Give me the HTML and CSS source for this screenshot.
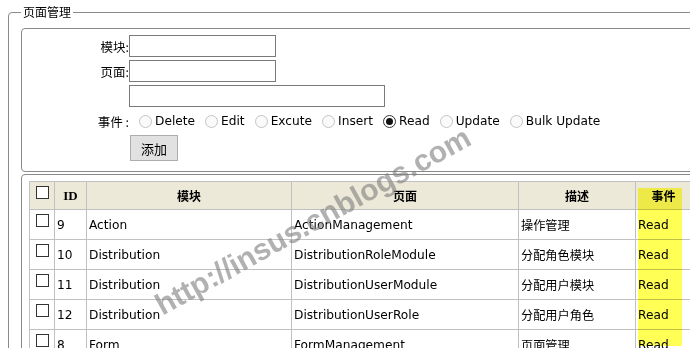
FILE: index.html
```html
<!DOCTYPE html>
<html lang="zh-CN">
<head>
    <meta charset="UTF-8">
    <title>页面管理</title>
    <link rel="stylesheet" href="styles.css">
</head>
<body>
    <!-- 页面管理 -->
    <fieldset class="outer">
        <legend>页面管理</legend>

        <!-- 添加表单 -->
        <fieldset class="box form-box">
            <div class="form">
                <label class="lbl">模块:</label>
                <input type="text" class="txt">

                <label class="lbl">页面:</label>
                <input type="text" class="txt">

                <span></span>
                <input type="text" class="txt wide">

                <label class="lbl">事件 :</label>
                <div class="events">
                    <span class="opt"><span class="radio"></span>Delete</span>
                    <span class="opt"><span class="radio"></span>Edit</span>
                    <span class="opt"><span class="radio"></span>Excute</span>
                    <span class="opt"><span class="radio"></span>Insert</span>
                    <span class="opt"><span class="radio checked"></span>Read</span>
                    <span class="opt"><span class="radio"></span>Update</span>
                    <span class="opt"><span class="radio"></span>Bulk Update</span>
                </div>

                <span></span>
                <div><button type="button" class="btn">添加</button></div>
            </div>
        </fieldset>

        <!-- 列表 -->
        <fieldset class="box list-box">
            <table class="grid">
                <colgroup>
                    <col style="width:25px">
                    <col style="width:32px">
                    <col style="width:205px">
                    <col style="width:227px">
                    <col style="width:117px">
                    <col style="width:56px">
                </colgroup>
                <thead>
                    <tr>
                        <th><span class="chk"></span></th>
                        <th class="id">ID</th>
                        <th>模块</th>
                        <th>页面</th>
                        <th>描述</th>
                        <th>事件</th>
                    </tr>
                </thead>
                <tbody>
                    <tr>
                        <td><span class="chk"></span></td>
                        <td>9</td>
                        <td>Action</td>
                        <td>ActionManagement</td>
                        <td>操作管理</td>
                        <td>Read</td>
                    </tr>
                    <tr>
                        <td><span class="chk"></span></td>
                        <td>10</td>
                        <td>Distribution</td>
                        <td>DistributionRoleModule</td>
                        <td>分配角色模块</td>
                        <td>Read</td>
                    </tr>
                    <tr>
                        <td><span class="chk"></span></td>
                        <td>11</td>
                        <td>Distribution</td>
                        <td>DistributionUserModule</td>
                        <td>分配用户模块</td>
                        <td>Read</td>
                    </tr>
                    <tr>
                        <td><span class="chk"></span></td>
                        <td>12</td>
                        <td>Distribution</td>
                        <td>DistributionUserRole</td>
                        <td>分配用户角色</td>
                        <td>Read</td>
                    </tr>
                    <tr>
                        <td><span class="chk"></span></td>
                        <td>8</td>
                        <td>Form</td>
                        <td>FormManagement</td>
                        <td>页面管理</td>
                        <td>Read</td>
                    </tr>
                </tbody>
            </table>
        </fieldset>
    </fieldset>

    <!-- 高亮标记 + 水印 -->
    <div class="highlight"></div>
    <div class="watermark">http://insus.cnblogs.com</div>
</body>
</html>
```

FILE: styles.css
```css
html, body {
    overflow: hidden;
}

body {
    margin: 0;
    padding: 5px 0 0 8px;
    background: #ffffff;
    color: #000000;
    font-family: "DejaVu Sans", Verdana, "Noto Sans CJK SC", sans-serif;
    font-size: 12px;
    position: relative;
    height: 343px;
}

/* Cadres */
.outer {
    margin: 0;
    width: 760px;
    border: 1px solid #8a8a8a;
    border-radius: 4px;
    padding: 9px 12px 0 12px;
}

.outer legend {
    padding: 0 2px;
    font-size: 12px;
    line-height: 14px;
    font-family: "Noto Sans CJK SC", sans-serif;
}

.box {
    margin: 0;
    border: 1px solid #8a8a8a;
    border-radius: 4px;
    min-width: 0;
}

.form-box {
    padding: 6px 8px 10px 8px;
}

.list-box {
    margin-top: 2px;
    padding: 6px 7px 0 7px;
}

/* Formulaire */
.form {
    display: grid;
    grid-template-columns: 99px auto;
    row-gap: 3px;
    align-items: center;
}

.lbl {
    text-align: right;
    font-family: "Noto Sans CJK SC", sans-serif;
    font-size: 12.5px;
    white-space: nowrap;
}

.txt {
    box-sizing: border-box;
    width: 147px;
    height: 22px;
    margin: 0;
    border: 1px solid #7a7a7a;
    padding: 1px 3px;
    font-size: 12px;
}

.txt.wide {
    width: 256px;
}

.events {
    height: 22px;
    display: flex;
    align-items: center;
    padding-left: 10px;
    font-size: 12.2px;
}

.opt {
    display: flex;
    align-items: center;
    margin-right: 10px;
}

.radio {
    box-sizing: border-box;
    width: 13px;
    height: 13px;
    border: 1px solid #c4c4c4;
    border-radius: 50%;
    background: #fafafa;
    margin-right: 3px;
    position: relative;
}

.radio.checked {
    border-color: #333333;
    background: #ffffff;
}

.radio.checked::after {
    content: '';
    position: absolute;
    left: 2px;
    top: 2px;
    width: 7px;
    height: 7px;
    border-radius: 50%;
    background: #111111;
}

.btn {
    margin-left: 1px;
    width: 48px;
    height: 26px;
    border: 1px solid #adadad;
    background: #e1e1e1;
    font-family: "Noto Sans CJK SC", sans-serif;
    font-size: 13px;
    padding: 0;
    color: #000000;
}

/* Tableau */
.grid {
    table-layout: fixed;
    width: 662px;
    border-collapse: collapse;
    font-size: 12px;
}

.grid th, .grid td {
    border: 1px solid #c0c0c0;
    padding: 0 2px;
    white-space: nowrap;
    overflow: hidden;
}

.grid th {
    height: 27px;
    background: #ece9d8;
    font-family: "Noto Sans CJK SC", sans-serif;
    font-weight: bold;
    font-size: 12px;
    text-align: center;
}

.grid th.id {
    font-family: "Liberation Serif", serif;
    font-size: 13px;
}

.grid td {
    height: 29px;
    font-family: "DejaVu Sans", "Noto Sans CJK SC", sans-serif;
    font-size: 12.2px;
}

.grid td:first-child, .grid th:first-child {
    text-align: center;
    padding: 0;
}

.chk {
    display: inline-block;
    box-sizing: border-box;
    width: 13px;
    height: 13px;
    border: 1px solid #333333;
    background: #ffffff;
    vertical-align: -1px;
    position: relative;
    top: -3px;
}

/* Marquage jaune sur la colonne 事件 */
.highlight {
    position: absolute;
    left: 638px;
    top: 188px;
    width: 44px;
    height: 158px;
    background: #ffff55;
    mix-blend-mode: multiply;
    pointer-events: none;
}

/* Filigrane */
.watermark {
    position: absolute;
    left: 313px;
    top: 221px;
    transform: translate(-50%, -50%) rotate(-29deg);
    font-family: "Liberation Sans", Arial, sans-serif;
    font-weight: bold;
    font-size: 30px;
    color: rgba(125, 125, 125, 0.6);
    white-space: nowrap;
    pointer-events: none;
}
```
